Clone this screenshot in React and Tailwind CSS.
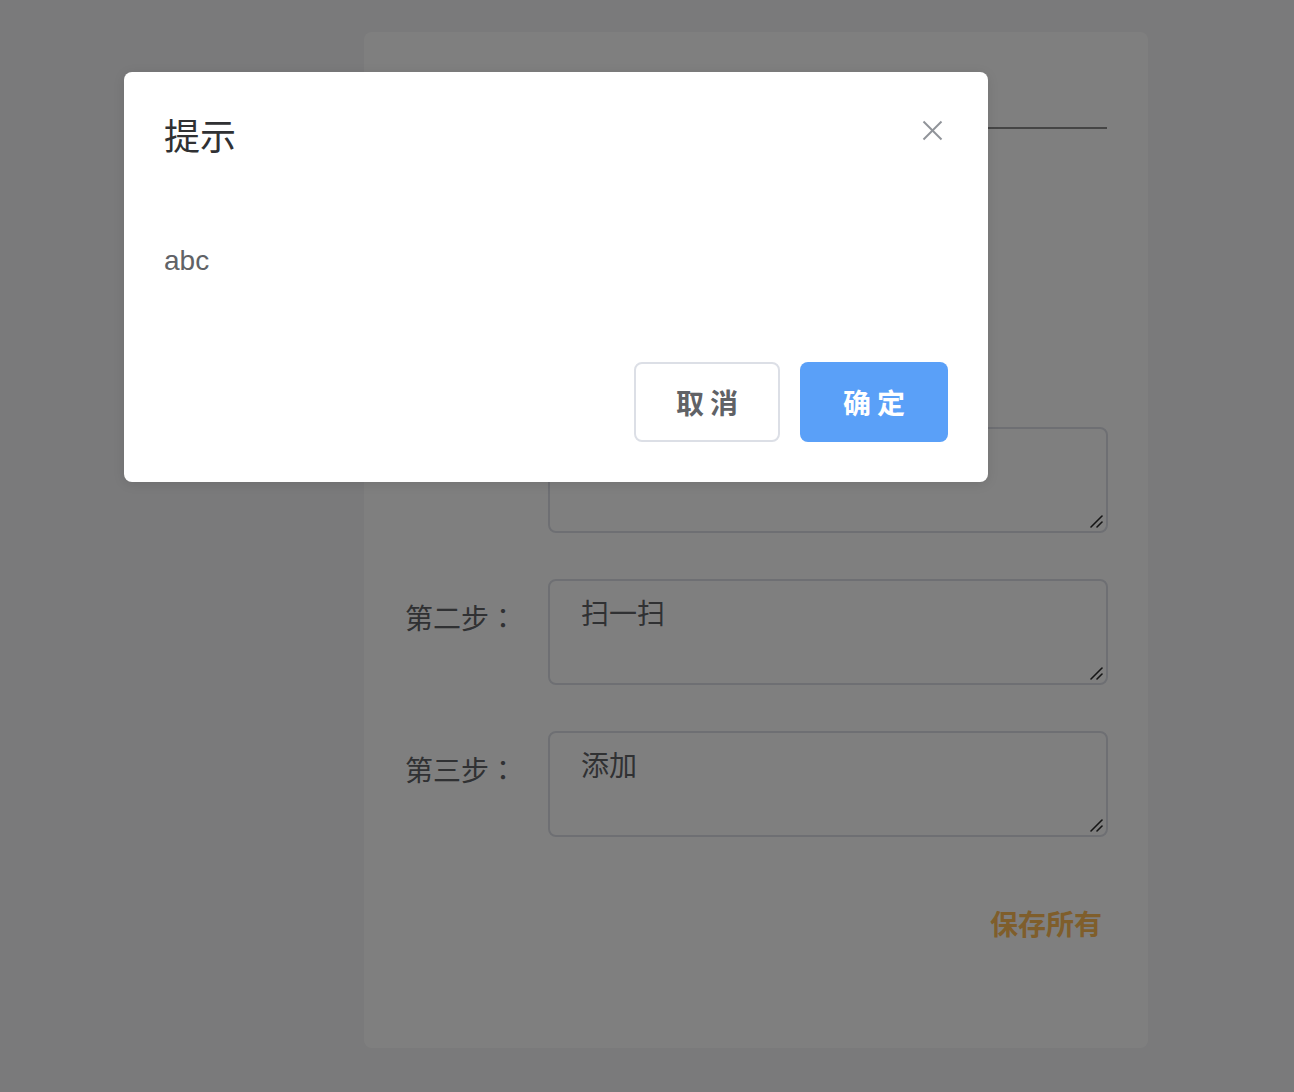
import React from "react";

const cjk = "font-['Noto_Sans_CJK_SC','Noto_Sans',sans-serif]";

function Grip() {
  return (
    <svg
      className="pointer-events-none absolute bottom-[4px] right-[4px]"
      width="16"
      height="16"
      viewBox="0 0 16 16"
      fill="none"
      stroke="#2b2b2b"
      strokeWidth="1.6"
      strokeLinecap="round"
    >
      <line x1="3" y1="14" x2="14" y2="3" />
      <line x1="9" y1="14" x2="14" y2="9" />
    </svg>
  );
}

function StepRow({ label, value }) {
  return (
    <div className="flex">
      <div className={`w-[144px] shrink-0 pt-[17px] pl-px text-[28px] leading-[42px] text-[#606266] ${cjk}`}>
        {label}
        <span className="font-['Noto_Sans_CJK_TC',sans-serif]">：</span>
      </div>
      <div className="relative">
        <textarea
          readOnly
          defaultValue={value}
          className={`block w-[560px] h-[106px] rounded-lg border-2 border-[#dcdfe6] bg-white px-[31px] py-[10px] text-[28px] leading-[42px] text-[#606266] outline-none resize-none ${cjk}`}
        />
        <Grip />
      </div>
    </div>
  );
}

export default function App() {
  return (
    <div className="relative h-[1092px] w-full overflow-hidden bg-[#f4f4f6]">
      <div className="pt-8 pl-[364px]">
        <div className="flex h-[1016px] w-[784px] flex-col rounded-lg bg-white px-10">
          <div className="h-[97px] border-b-2 border-[#8a8a8a] w-[703px]" />
          <div className="mt-[298px] flex flex-col gap-[46px]">
            <StepRow label="第一步" value="打开微信" />
            <StepRow label="第二步" value="扫一扫" />
            <StepRow label="第三步" value="添加" />
          </div>
          <div className="mt-[65px] flex justify-end pr-[6px]">
            <span className={`text-[28px] font-bold leading-[42px] text-[#ffbc56] ${cjk}`}>保存所有</span>
          </div>
        </div>
      </div>

      <div className="absolute inset-0 bg-black/50" />

      <div className="absolute left-[124px] top-[72px] flex h-[410px] w-[864px] flex-col rounded-lg bg-white shadow-[0_2px_12px_rgba(0,0,0,0.1)]">
        <div className="flex items-start justify-between pl-10 pr-[44px] pt-[37px]">
          <div className={`text-[36px] leading-[50px] text-[#303133] ${cjk}`}>提示</div>
          <button className="mt-[9px] flex h-6 w-6 items-center justify-center" aria-label="close">
            <svg width="21" height="21" viewBox="0 0 21 21" fill="none" stroke="#909399" strokeWidth="2">
              <line x1="1.5" y1="1.5" x2="19.5" y2="19.5" />
              <line x1="19.5" y1="1.5" x2="1.5" y2="19.5" />
            </svg>
          </button>
        </div>
        <div className="pl-10 pt-[81px] text-[28px] leading-[42px] text-[#606266] font-['Liberation_Sans','Noto_Sans_CJK_SC',sans-serif]">
          abc
        </div>
        <div className="mt-auto flex justify-end gap-5 pb-[40px] pr-10">
          <button className={`h-[80px] w-[146px] rounded-lg border-2 border-[#dcdfe6] bg-white pl-[6px] text-[28px] font-bold tracking-[6px] text-[#606266] ${cjk}`}>
            取消
          </button>
          <button className={`h-[80px] w-[148px] rounded-lg bg-[#5aa0f8] pl-[6px] text-[28px] font-bold tracking-[6px] text-white ${cjk}`}>
            确定
          </button>
        </div>
      </div>
    </div>
  );
}
